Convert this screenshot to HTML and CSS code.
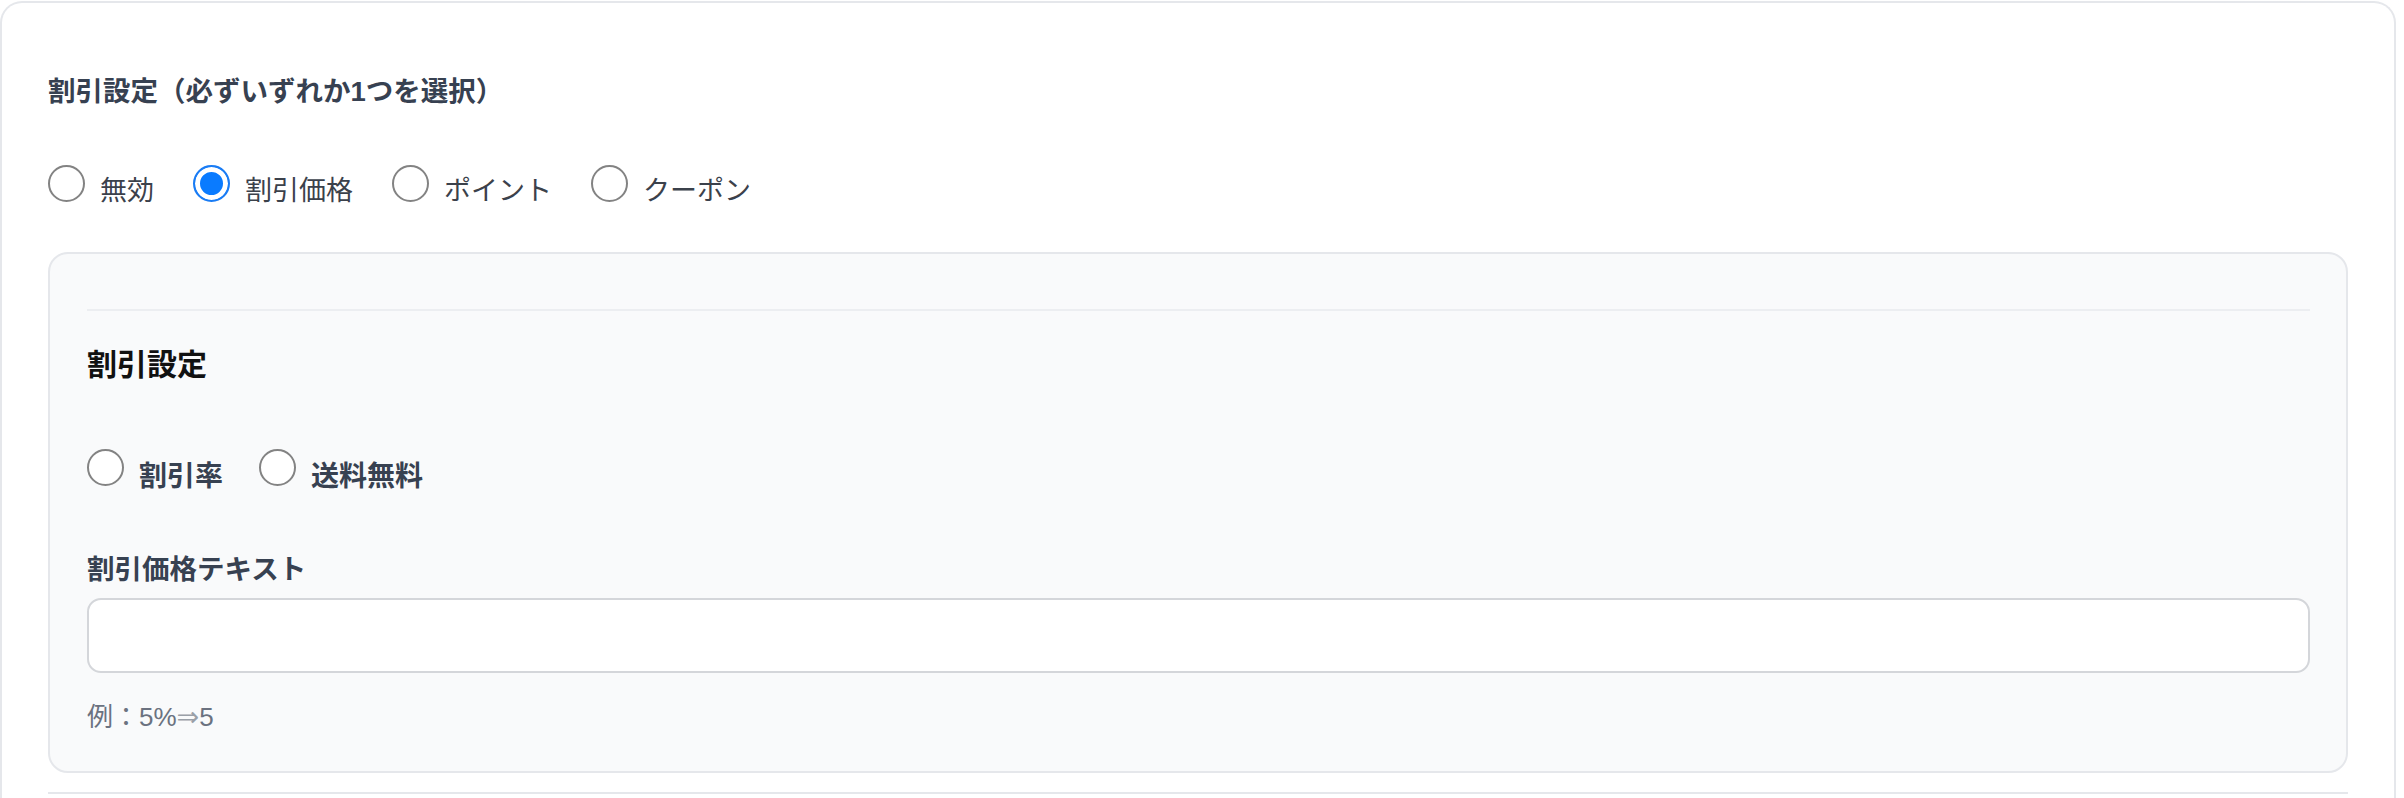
FILE: index.html
```html
<!DOCTYPE html>
<html lang="ja">
<head>
<meta charset="utf-8">
<title>割引設定</title>
<link rel="stylesheet" href="styles.css">
</head>
<body>
<div class="card">
  <h2 class="title">割引設定（必ずいずれか1つを選択）</h2>
  <div class="radio-row">
    <label class="opt"><input type="radio" name="type" class="radio"><span class="opt-text">無効</span></label>
    <label class="opt"><input type="radio" name="type" class="radio" checked><span class="opt-text">割引価格</span></label>
    <label class="opt"><input type="radio" name="type" class="radio"><span class="opt-text">ポイント</span></label>
    <label class="opt"><input type="radio" name="type" class="radio"><span class="opt-text">クーポン</span></label>
  </div>
  <div class="panel">
    <div class="divider"></div>
    <h3 class="panel-title">割引設定</h3>
    <div class="radio-row sub">
      <label class="opt"><input type="radio" name="sub" class="radio"><span class="opt-text bold">割引率</span></label>
      <label class="opt"><input type="radio" name="sub" class="radio"><span class="opt-text bold">送料無料</span></label>
    </div>
    <label class="field-label" for="dtext">割引価格テキスト</label>
    <input id="dtext" class="text-input" type="text">
    <p class="help">例：5%<span class="arrow">⇒</span>5</p>
  </div>
  <div class="bottom-rule"></div>
</div>
</body>
</html>
```
FILE: styles.css
```css
* { box-sizing: border-box; }
html, body { margin: 0; padding: 0; background: #ffffff; }
body {
  font-family: "Liberation Sans", "Noto Sans CJK JP", sans-serif;
  color: #374151;
}
.card {
  margin-top: 1px;
  width: 2396px;
  border: 2px solid #e5e7eb;
  border-bottom: none;
  border-radius: 22px 22px 0 0;
  padding: 69px 46px 10px 46px;
  height: 820px;
}
.title {
  margin: 0;
  font-size: 27.5px;
  line-height: 40px;
  font-weight: 700;
  color: #374151;
}
.radio-row {
  display: flex;
  align-items: flex-start;
  gap: 39px;
  margin-top: 53px;
}
.opt {
  display: flex;
  align-items: flex-start;
  gap: 15px;
}
.radio {
  appearance: none;
  -webkit-appearance: none;
  margin: 0;
  width: 37px;
  height: 37px;
  border-radius: 50%;
  border: 2px solid #838383;
  background: #ffffff;
  flex: none;
}
.radio:checked {
  border-color: #1a7cf4;
  background: #0a7bff;
  box-shadow: inset 0 0 0 5px #ffffff;
}
.opt-text {
  margin-top: 6px;
  font-size: 27px;
  line-height: 40px;
  color: #3b414b;
  font-weight: 400;
}
.opt-text.bold {
  font-size: 28px;
  font-weight: 700;
  color: #374151;
  margin-top: 8px;
}
.panel {
  margin-top: 41px;
  background: #f9fafb;
  border: 2px solid #e5e7eb;
  border-radius: 20px;
  padding: 0 36px 35px 37px;
}
.divider {
  margin-top: 55px;
  height: 2px;
  background: #eceef1;
}
.panel-title {
  margin: 34px 0 0 0;
  font-size: 30px;
  line-height: 40px;
  font-weight: 700;
  color: #111111;
}
.radio-row.sub {
  margin-top: 64px;
  gap: 36px;
}
.field-label {
  display: block;
  margin-top: 53px;
  font-size: 27.5px;
  line-height: 40px;
  font-weight: 700;
  color: #374151;
}
.text-input {
  display: block;
  width: 100%;
  height: 75px;
  margin-top: 8px;
  border: 2px solid #d4d6da;
  border-radius: 14px;
  background: #ffffff;
  font-size: 24px;
  padding: 0 16px;
  outline: none;
}
.help {
  margin: 25px 0 0 0;
  font-size: 26px;
  line-height: 38px;
  color: #6b7280;
}
.arrow {
  font-family: "DejaVu Sans", sans-serif;
  font-size: 27px;
  color: #9aa0a8;
}
.bottom-rule {
  margin-top: 19px;
  height: 2px;
  background: #e5e7eb;
}
```
